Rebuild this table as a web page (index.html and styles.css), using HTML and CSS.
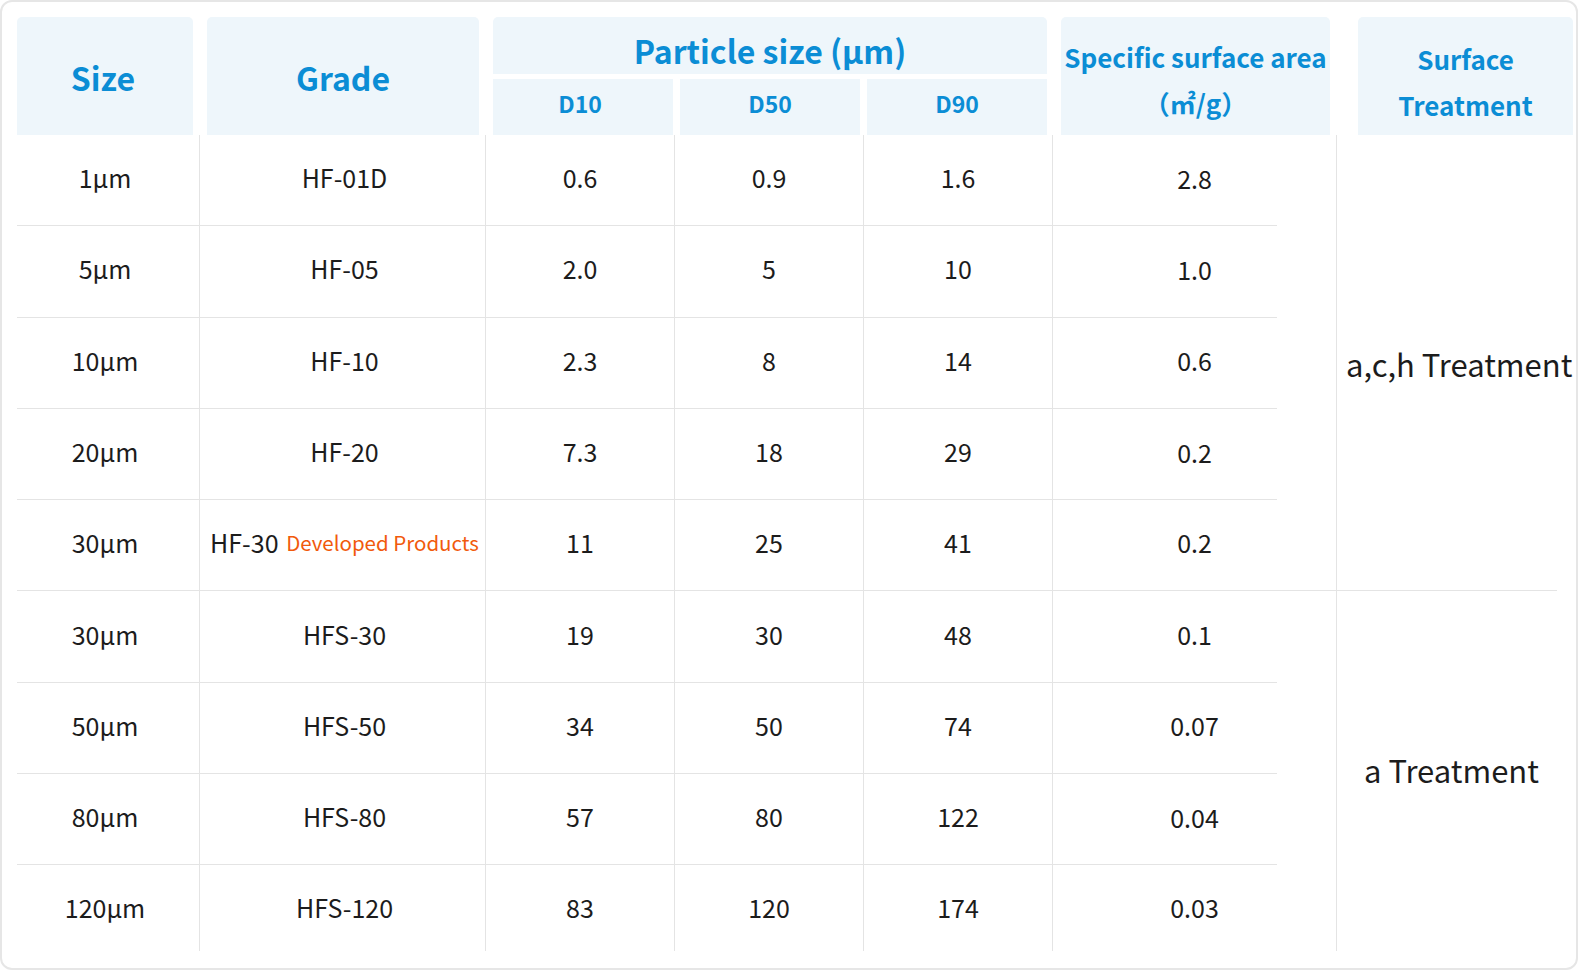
FILE: index.html
```html
<!DOCTYPE html>
<html lang="en">
<head>
<meta charset="utf-8">
<title>Particle size table</title>
<link rel="stylesheet" href="styles.css">
</head>
<body>
<div class="card">
  <div class="head">
    <div class="h h-size">Size</div>
    <div class="h h-grade">Grade</div>
    <div class="h-group">
      <div class="h h-title">Particle size (μm)</div>
      <div class="h-subs">
        <div class="h h-sub h-d10">D10</div>
        <div class="h h-sub">D50</div>
        <div class="h h-sub">D90</div>
      </div>
    </div>
    <div class="h h-two h-spec">Specific surface area<br>（㎡/g）</div>
    <div class="h h-two h-surf">Surface<br>Treatment</div>
  </div>
  <div class="body">
    <div class="row"><div class="c">1μm</div><div class="c">HF-01D</div><div class="c">0.6</div><div class="c">0.9</div><div class="c">1.6</div><div class="c spec">2.8</div><div class="surf surf-a">a,c,h Treatment</div></div>
    <div class="row"><div class="c">5μm</div><div class="c">HF-05</div><div class="c">2.0</div><div class="c">5</div><div class="c">10</div><div class="c spec">1.0</div></div>
    <div class="row"><div class="c">10μm</div><div class="c">HF-10</div><div class="c">2.3</div><div class="c">8</div><div class="c">14</div><div class="c spec">0.6</div></div>
    <div class="row"><div class="c">20μm</div><div class="c">HF-20</div><div class="c">7.3</div><div class="c">18</div><div class="c">29</div><div class="c spec">0.2</div></div>
    <div class="row"><div class="c">30μm</div><div class="c">HF-30&nbsp;<span class="dev">Developed Products</span></div><div class="c">11</div><div class="c">25</div><div class="c">41</div><div class="c spec-full">0.2</div></div>
    <div class="row"><div class="c">30μm</div><div class="c">HFS-30</div><div class="c">19</div><div class="c">30</div><div class="c">48</div><div class="c spec">0.1</div><div class="surf surf-b">a Treatment</div></div>
    <div class="row"><div class="c">50μm</div><div class="c">HFS-50</div><div class="c">34</div><div class="c">50</div><div class="c">74</div><div class="c spec">0.07</div></div>
    <div class="row"><div class="c">80μm</div><div class="c">HFS-80</div><div class="c">57</div><div class="c">80</div><div class="c">122</div><div class="c spec">0.04</div></div>
    <div class="row last"><div class="c">120μm</div><div class="c">HFS-120</div><div class="c">83</div><div class="c">120</div><div class="c">174</div><div class="c spec">0.03</div></div>
  </div>
</div>
</body>
</html>
```

FILE: styles.css
```css
* { box-sizing: border-box; }
html, body { margin: 0; padding: 0; background: #ffffff; }
body {
  font-family: "Noto Sans CJK JP", "Noto Sans CJK SC", "Noto Sans", sans-serif;
  color: #1c1c1c;
}
.card {
  width: 1578px;
  height: 970px;
  border: 2px solid #e6e6e6;
  border-radius: 12px;
  padding: 15px 0 0 15px;
}
.head {
  display: grid;
  grid-template-columns: 176px 272px 554px 269px 229px;
  column-gap: 14px;
  height: 118px;
}
.h {
  background: #eef6fb;
  color: #0b8dd5;
  font-weight: 700;
  display: flex;
  align-items: center;
  justify-content: center;
  text-align: center;
  border-radius: 5px 5px 0 0;
}
.h-size, .h-grade { font-size: 32px; padding-top: 2px; }
.h-size { padding-right: 4px; }
.h-group {
  display: grid;
  grid-template-rows: 57px 56px;
  row-gap: 5px;
}
.h-title { font-size: 32px; padding-top: 8px; }
.h-subs {
  display: grid;
  grid-template-columns: 1fr 1fr 1fr;
  column-gap: 7px;
}
.h-sub { font-size: 23px; border-radius: 0; padding-bottom: 9px; }
.h-d10 { padding-right: 6px; }
.h-two { font-size: 26px; line-height: 46px; }
.h-spec { padding-top: 8px; }
.h-surf { margin-left: 14px; width: 215px; padding-top: 12px; }

.body {
  display: grid;
  grid-template-columns: 182px 286px 189px 189px 189px 284px 221px;
  grid-template-rows: repeat(8, 91.3px) 86px;
}
.row { display: contents; }
.c {
  display: flex;
  align-items: center;
  justify-content: center;
  font-size: 25px;
  padding-bottom: 6px;
  border-left: 1px solid #e4e4e4;
  border-bottom: 1px solid #e4e4e4;
  white-space: nowrap;
}
.c:first-child { border-left: none; padding-right: 6px; }
.c:nth-child(2) { padding-left: 4px; }
.row.last .c { border-bottom: none; padding-bottom: 2px; }
.c.spec {
  border-bottom: none;
  background: linear-gradient(#e4e4e4, #e4e4e4) no-repeat left bottom / 224px 1px;
}
.row.last .c.spec { background: none; }
.dev { color: #f15a0c; font-size: 20.5px; margin-left: 2px; }
.surf {
  grid-column: 7;
  border-left: 1px solid #e4e4e4;
  display: flex;
  align-items: center;
  justify-content: center;
  padding-left: 9px;
  font-size: 31px;
  white-space: nowrap;
  color: #1c1c1c;
}
.surf-a { grid-row: span 5; border-bottom: 1px solid #e4e4e4; justify-content: flex-start; padding-top: 2px; }
.surf-b { grid-row: span 4; padding-bottom: 4px; }
```
